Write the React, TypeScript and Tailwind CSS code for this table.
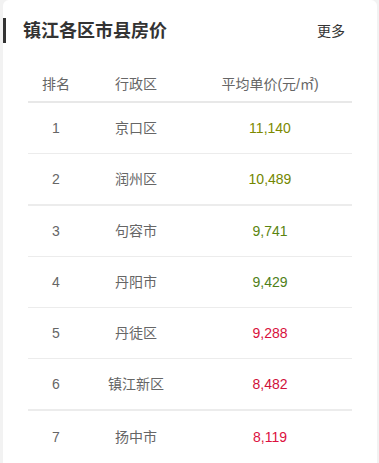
import React from "react";

const rows = [
  { r: "1", n: "京口区", p: "11,140", c: "text-[#7d8a00]", h: "h-[51px] border-b border-[#ececec]" },
  { r: "2", n: "润州区", p: "10,489", c: "text-[#738700]", h: "h-[52px] border-b-2 border-[#ececec]" },
  { r: "3", n: "句容市", p: "9,741", c: "text-[#5a8410]", h: "h-[51px] border-b border-[#ececec]" },
  { r: "4", n: "丹阳市", p: "9,429", c: "text-[#4f8018]", h: "h-[51px] border-b border-[#ececec]" },
  { r: "5", n: "丹徒区", p: "9,288", c: "text-[#d8103c]", h: "h-[51px] border-b border-[#ececec]" },
  { r: "6", n: "镇江新区", p: "8,482", c: "text-[#d0103a]", h: "h-[52px] border-b-2 border-[#ececec]" },
  { r: "7", n: "扬中市", p: "8,119", c: "text-[#dc1040]", h: "h-[52px]" },
];

export default function App() {
  return (
    <div
      className="w-[379px] h-[463px] bg-[#f2f2f2] overflow-hidden"
      style={{ fontFamily: '"Liberation Sans", "Noto Sans CJK SC", sans-serif' }}
    >
      <div className="ml-[3px] w-[374px] h-full bg-white rounded-t-[6px]">
        <div className="pt-[18px]">
          <div className="h-[25px] flex items-center justify-between border-l-[3px] border-[#333] pl-[17px] pr-[32px]">
            <span className="text-[18px] font-bold text-[#333] leading-none">镇江各区市县房价</span>
            <span className="text-[14px] text-[#333] leading-none">更多</span>
          </div>
        </div>
        <div className="mx-[25px] mt-[24px]">
          <div className="h-[36px] flex items-center border-b-2 border-[#e8e8e8] text-[14px] text-[#666]">
            <div className="w-[56px] text-center">排名</div>
            <div className="w-[104px] text-center">行政区</div>
            <div className="flex-1 text-center">平均单价(元/㎡)</div>
          </div>
          {rows.map((row) => (
            <div key={row.r} className={`flex items-center text-[14px] text-[#666] ${row.h}`}>
              <div className="w-[56px] text-center">{row.r}</div>
              <div className="w-[104px] text-center">{row.n}</div>
              <div className={`flex-1 text-center ${row.c}`}>{row.p}</div>
            </div>
          ))}
        </div>
      </div>
    </div>
  );
}
